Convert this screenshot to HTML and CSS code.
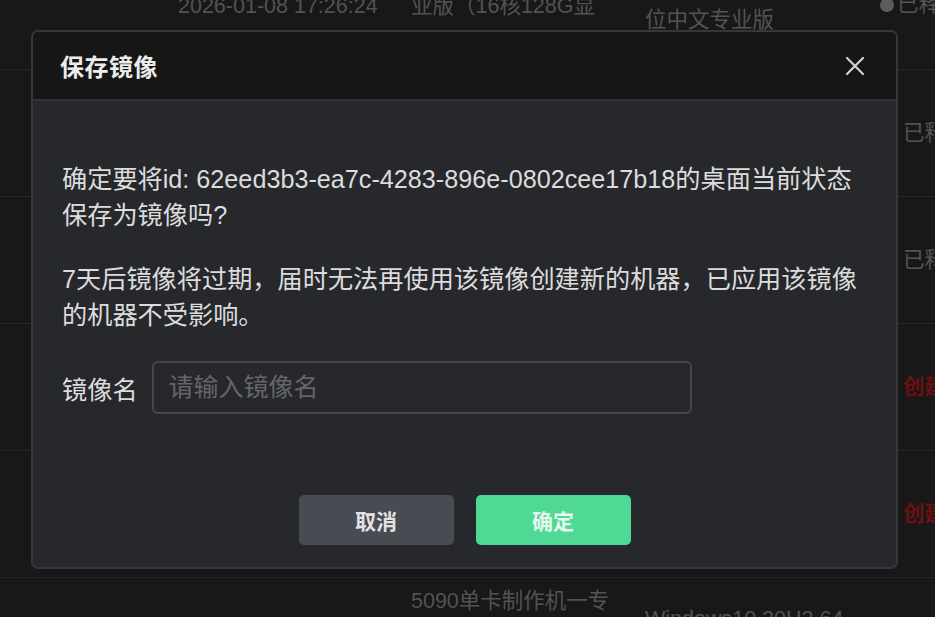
FILE: index.html
```html
<!DOCTYPE html>
<html lang="zh-CN">
<head>
<meta charset="utf-8">
<title>保存镜像</title>
<link rel="stylesheet" href="styles.css">
</head>
<body>
<div class="page">
  <div class="table">
    <div class="row">
      <div class="cell c-a end pb48">2026-01-08 17:26:24</div>
      <div class="cell c-b end pb48">业版（16核128G显</div>
      <div class="cell c-c end pb33">位中文专业版</div>
      <div class="cell c-d end pb50"><span class="dot"></span>已释放</div>
    </div>
    <div class="row">
      <div class="cell c-d mid">已释放</div>
    </div>
    <div class="row">
      <div class="cell c-d mid">已释放</div>
    </div>
    <div class="row">
      <div class="cell c-d mid red">创建失败</div>
    </div>
    <div class="row">
      <div class="cell c-d mid red">创建失败</div>
    </div>
    <div class="row row-last">
      <div class="cell c-b pt10">5090单卡制作机一专</div>
      <div class="cell c-c pt28">Windows10 20H2 64</div>
    </div>
  </div>

  <div class="modal">
    <div class="modal-header">
      <div class="modal-title">保存镜像</div>
      <svg class="close" width="20" height="20" viewBox="0 0 20 20" aria-hidden="true">
        <path d="M2 2 L18 18 M18 2 L2 18" stroke="#d2d2d4" stroke-width="2.2" stroke-linecap="round"/>
      </svg>
    </div>
    <div class="modal-body">
      <p class="msg">确定要将id: 62eed3b3-ea7c-4283-896e-0802cee17b18的桌面当前状态保存为镜像吗?</p>
      <p class="msg">7天后镜像将过期，届时无法再使用该镜像创建新的机器，已应用该镜像的机器不受影响。</p>
      <div class="field">
        <label class="field-label" for="name">镜像名</label>
        <input class="field-input" id="name" type="text" placeholder="请输入镜像名">
      </div>
      <div class="actions">
        <button class="btn btn-cancel">取消</button>
        <button class="btn btn-ok">确定</button>
      </div>
    </div>
  </div>
</div>
</body>
</html>
```

FILE: styles.css
```css
* { box-sizing: border-box; }
html, body {
  margin: 0;
  padding: 0;
  background: #181818;
}
body {
  font-family: "Liberation Sans", "Noto Sans CJK SC", sans-serif;
}
.page {
  position: relative;
  width: 935px;
  height: 617px;
  overflow: hidden;
  background: #181818;
}
.table {
  display: flex;
  flex-direction: column;
  margin-top: -57px;
}
.row {
  display: grid;
  grid-template-columns: 178px 233px 234px 235px 1fr;
  grid-template-rows: 100%;
  height: 127px;
  flex: none;
  border-bottom: 1px solid #262626;
  color: #535353;
  font-size: 21.5px;
  line-height: 28px;
  white-space: nowrap;
}
.row-last { border-bottom: none; height: 60px; }
.c-a { grid-column: 2; }
.c-b { grid-column: 3; }
.c-c { grid-column: 4; }
.c-d { grid-column: 5; }
.row .c-d.mid { padding-left: 23px; }
.end { align-self: end; }
.mid { align-self: center; }
.pb48 { padding-bottom: 49px; }
.pb33 { padding-bottom: 35px; }
.pb50 { padding-bottom: 51px; }
.pt10 { padding-top: 9px; }
.pt28 { padding-top: 27px; }
.red { color: #6a1212; font-weight: bold; }
.dot {
  display: inline-block;
  width: 14px;
  height: 14px;
  border-radius: 50%;
  background: #5d5d5f;
  margin-right: 3px;
  vertical-align: -1px;
}

.modal {
  position: absolute;
  left: 31px;
  top: 30px;
  width: 867px;
  height: 539px;
  border: 2px solid #36373c;
  border-radius: 7px;
  background: #27282c;
  overflow: hidden;
  display: flex;
  flex-direction: column;
}
.modal-header {
  height: 69px;
  flex: none;
  background: #161617;
  border-bottom: 2px solid #303136;
  display: flex;
  align-items: center;
  justify-content: space-between;
  padding: 0 31px 0 27px;
}
.modal-title {
  color: #ececec;
  font-size: 24px;
  font-weight: bold;
  letter-spacing: 0.5px;
}
.close { display: block; }
.modal-body {
  flex: 1;
  padding: 60px 29px 0 29px;
  display: flex;
  flex-direction: column;
}
.msg {
  margin: 0 0 28px 0;
  color: #dcdcdd;
  font-size: 25.2px;
  line-height: 36px;
}
.field {
  display: flex;
  align-items: center;
  gap: 14px;
}
.field-label {
  color: #dcdcdd;
  font-size: 25.2px;
}
.field-input {
  width: 540px;
  height: 53px;
  border: 2px solid #46474c;
  border-radius: 6px;
  background: #27282c;
  padding: 0 15px;
  font-family: inherit;
  font-size: 25px;
  color: #dcdcdd;
  outline: none;
}
.field-input::placeholder { color: #65666b; }
.actions {
  display: flex;
  justify-content: center;
  gap: 22px;
  margin-top: 81px;
}
.btn {
  width: 155px;
  height: 50px;
  border: none;
  border-radius: 5px;
  font-family: inherit;
  font-size: 21px;
  font-weight: bold;
  cursor: pointer;
}
.btn-cancel {
  background: #484b52;
  color: #e2e2e4;
}
.btn-ok {
  background: #50d994;
  color: #e6f7ee;
}
```
